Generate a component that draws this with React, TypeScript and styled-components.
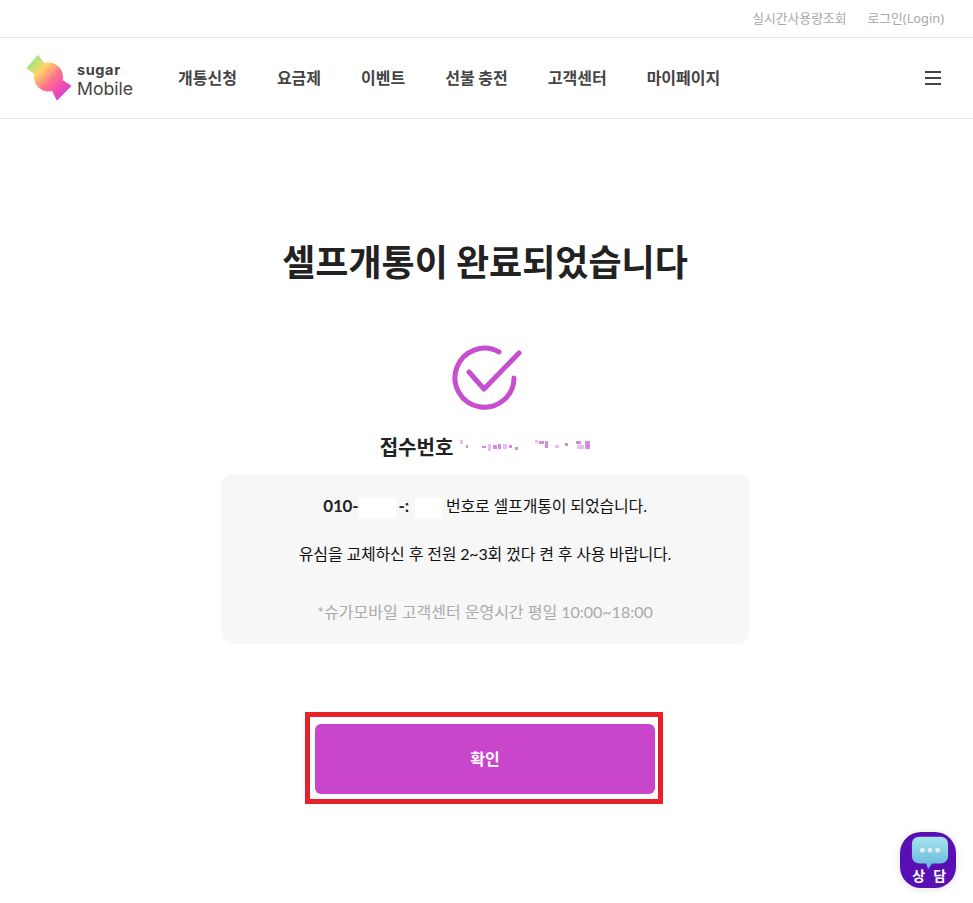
import React from 'react';
import styled, { createGlobalStyle } from 'styled-components';

const KR = `"Noto Sans CJK KR", "Noto Sans", sans-serif`;
const LATIN_KR = `Lato, "Noto Sans CJK KR", sans-serif`;

const GlobalStyle = createGlobalStyle`
    html, body {
        margin: 0;
        padding: 0;
        background: #fff;
    }
    * {
        box-sizing: border-box;
    }
`;

const menus = ['개통신청', '요금제', '이벤트', '선불 충전', '고객센터', '마이페이지'];

const noise = [
    [0, 0, 3, 4], [6, 5, 2, 3], [22, 6, 4, 2], [28, 4, 3, 7], [33, 5, 4, 4], [38, 4, 3, 5], [43, 4, 4, 5],
    [49, 5, 3, 3], [55, 7, 3, 3], [75, 0, 3, 3], [79, 1, 5, 3], [85, 1, 3, 7], [95, 5, 4, 3], [105, 3, 3, 3],
    [116, 1, 5, 3], [117, 5, 7, 4], [125, 1, 5, 8],
];

const Logo = () => (
    <svg width="48" height="48" viewBox="0 0 48 48">
        <defs>
            <linearGradient id="candy" gradientUnits="userSpaceOnUse" x1="5" y1="5" x2="42" y2="42">
                <stop offset="0" stopColor="#8fe88a" />
                <stop offset="0.28" stopColor="#ffd465" />
                <stop offset="0.58" stopColor="#ff6f8e" />
                <stop offset="0.76" stopColor="#f54fae" />
                <stop offset="1" stopColor="#c244d6" />
            </linearGradient>
        </defs>
        <g fill="url(#candy)" stroke="url(#candy)" strokeWidth="1.5" strokeLinejoin="round">
            <path d="M12 2 L1.5 14 L8 19 L18 10 Z" />
            <path d="M44.5 32 L31 45.5 L27 37 L37 27 Z" />
        </g>
        <circle cx="22.5" cy="23" r="14.5" fill="url(#candy)" />
    </svg>
);

const CheckMark = () => (
    <svg width="80" height="70" viewBox="0 0 80 70" fill="none" stroke="#c64fcf" strokeWidth="5" strokeLinecap="round" strokeLinejoin="round">
        <path d="M54 9 A29.5 29.5 0 1 0 69 35" />
        <path d="M24 29 L39 46 L74 10" />
    </svg>
);

const Noise = () => (
    <svg width="130" height="12" viewBox="0 0 130 12">
        {noise.map(([x, y, w, h], i) => (
            <rect key={i} x={x} y={y} width={w} height={h} fill={i % 3 === 0 ? '#e6c0ec' : '#d48ade'} />
        ))}
    </svg>
);

const Bubble = () => (
    <svg width="38" height="36" viewBox="0 0 40 36">
        <defs>
            <linearGradient id="bubble" x1="0" y1="0" x2="0" y2="1">
                <stop offset="0" stopColor="#a6e2ee" />
                <stop offset="1" stopColor="#63b7dd" />
            </linearGradient>
        </defs>
        <path d="M9 1 H31 C36 1 39 4 39 9 V21 C39 26 36 29 31 29 H22 L18 35 L16 29 H9 C4 29 1 26 1 21 V9 C1 4 4 1 9 1 Z" fill="url(#bubble)" />
        <circle cx="12" cy="15" r="2.6" fill="#e3eef4" />
        <circle cx="20" cy="15" r="2.6" fill="#e3eef4" />
        <circle cx="28" cy="15" r="2.6" fill="#e3eef4" />
    </svg>
);

const App: React.FC = () => {
    return (
        <S.Page>
            <GlobalStyle />
            <S.TopBar>
                <S.TopLink>실시간사용량조회</S.TopLink>
                <S.TopLink>로그인(Login)</S.TopLink>
            </S.TopBar>
            <S.Header>
                <S.LogoPlace>
                    <Logo />
                    <S.LogoText>
                        <S.Sugar>sugar</S.Sugar>
                        <S.Mobile>Mobile</S.Mobile>
                    </S.LogoText>
                </S.LogoPlace>
                <S.Menu>
                    {menus.map((menu) => (
                        <S.MenuItem key={menu}>{menu}</S.MenuItem>
                    ))}
                </S.Menu>
                <S.Hamburger>
                    <span />
                    <span />
                    <span />
                </S.Hamburger>
            </S.Header>
            <S.Content>
                <S.Title>셀프개통이 완료되었습니다</S.Title>
                <S.IconPlace>
                    <CheckMark />
                </S.IconPlace>
                <S.Receipt>
                    접수번호
                    <Noise />
                </S.Receipt>
                <S.InfoBox>
                    <S.InfoLine>
                        <S.Number>010-</S.Number>
                        <S.Blank $width={37} />
                        <S.Number $gap>-:</S.Number>
                        <S.Blank $width={27} />
                        &nbsp;번호로 셀프개통이 되었습니다.
                    </S.InfoLine>
                    <S.InfoLine $top={24}>유심을 교체하신 후 전원 2~3회 껐다 켠 후 사용 바랍니다.</S.InfoLine>
                    <S.Note>*슈가모바일 고객센터 운영시간 평일 10:00~18:00</S.Note>
                </S.InfoBox>
                <S.Highlight>
                    <S.Confirm>확인</S.Confirm>
                </S.Highlight>
            </S.Content>
            <S.Chat>
                <Bubble />
                <S.ChatLabel>상 담</S.ChatLabel>
            </S.Chat>
        </S.Page>
    );
};

const S = {
    Page: styled.div`
        position: relative;
        width: 100%;
        height: 903px;
        overflow: hidden;
        background: #fff;
    `,
    TopBar: styled.div`
        display: flex;
        justify-content: flex-end;
        align-items: center;
        gap: 21px;
        height: 38px;
        padding: 0 29px 2px 0;
        border-bottom: 1px solid #e6e6e6;
    `,
    TopLink: styled.a`
        font-family: "Noto Sans", ${KR};
        font-size: 12.8px;
        color: #a8a8a8;
    `,
    Header: styled.div`
        display: flex;
        align-items: center;
        height: 81px;
        padding: 0 32px 0 26px;
        border-bottom: 1px solid #e6e6e6;
    `,
    LogoPlace: styled.div`
        display: flex;
        align-items: center;
        gap: 3px;
        width: 152px;
        height: 48px;
    `,
    LogoText: styled.div`
        display: flex;
        flex-direction: column;
        margin-top: 4px;
        color: #444;
        font-family: Inter, sans-serif;
    `,
    Sugar: styled.div`
        font-size: 14.5px;
        font-weight: 700;
        line-height: 16px;
        letter-spacing: 0.6px;
    `,
    Mobile: styled.div`
        margin-top: 1px;
        font-size: 17.6px;
        font-weight: 400;
        line-height: 20px;
    `,
    Menu: styled.nav`
        display: flex;
        align-items: center;
        gap: 40px;
        margin-bottom: 2px;
    `,
    MenuItem: styled.a`
        font-family: ${KR};
        font-size: 16px;
        font-weight: 700;
        color: #444;
    `,
    Hamburger: styled.div`
        display: flex;
        flex-direction: column;
        gap: 4px;
        width: 16px;
        margin-left: auto;

        span {
            display: block;
            height: 2px;
            background: #444;
        }
    `,
    Content: styled.main`
        display: flex;
        flex-direction: column;
        align-items: center;
        padding-right: 3px;
    `,
    Title: styled.h1`
        margin: 115px 0 0;
        font-family: ${KR};
        font-size: 36px;
        font-weight: 700;
        line-height: 52px;
        color: #222;
    `,
    IconPlace: styled.div`
        display: flex;
        height: 70px;
        margin-top: 57px;
    `,
    Receipt: styled.div`
        display: flex;
        align-items: center;
        gap: 7px;
        height: 28px;
        margin-top: 19px;
        font-family: ${KR};
        font-size: 20px;
        font-weight: 700;
        color: #222;
    `,
    InfoBox: styled.div`
        width: 528px;
        height: 170px;
        margin-top: 14px;
        padding-top: 20px;
        border-radius: 12px;
        background: #f7f7f7;
        text-align: center;
    `,
    InfoLine: styled.p<{ $top?: number }>`
        margin: ${(p) => p.$top ?? 0}px 0 0;
        font-family: ${LATIN_KR};
        font-size: 16px;
        line-height: 24px;
        letter-spacing: -0.15px;
        color: #111;
    `,
    Number: styled.b<{ $gap?: boolean }>`
        padding: ${(p) => (p.$gap ? '0 6px 0 3px' : '0')};
        font-size: 17px;
        color: #222;
    `,
    Blank: styled.span<{ $width: number }>`
        display: inline-block;
        width: ${(p) => p.$width}px;
        height: 20px;
        vertical-align: middle;
        background: #fff;
    `,
    Note: styled.p`
        margin: 34px 0 0;
        font-family: ${LATIN_KR};
        font-size: 16px;
        line-height: 24px;
        color: #aaa;
    `,
    Highlight: styled.div`
        width: 358px;
        height: 92px;
        margin: 68px 2px 0 0;
        padding: 7px 3px 0 5px;
        border: 5px solid #e8202a;
    `,
    Confirm: styled.button`
        display: block;
        width: 340px;
        height: 70px;
        padding: 0 0 2px;
        border: 0;
        border-radius: 6px;
        background: #c946cc;
        font-family: ${KR};
        font-size: 16px;
        font-weight: 700;
        color: #fff;
    `,
    Chat: styled.div`
        position: absolute;
        right: 17px;
        bottom: 15px;
        display: flex;
        flex-direction: column;
        align-items: center;
        width: 56px;
        height: 56px;
        padding: 3px 0 0 4px;
        border-radius: 21px;
        background: #5a0fb4;
        box-shadow: 0 1px 8px rgba(0, 0, 0, 0.12);
    `,
    ChatLabel: styled.div`
        margin-top: -4px;
        font-family: ${KR};
        font-size: 14px;
        font-weight: 700;
        line-height: 16px;
        letter-spacing: 1.5px;
        word-spacing: 2px;
        color: #fff;
    `,
};

export default App;
